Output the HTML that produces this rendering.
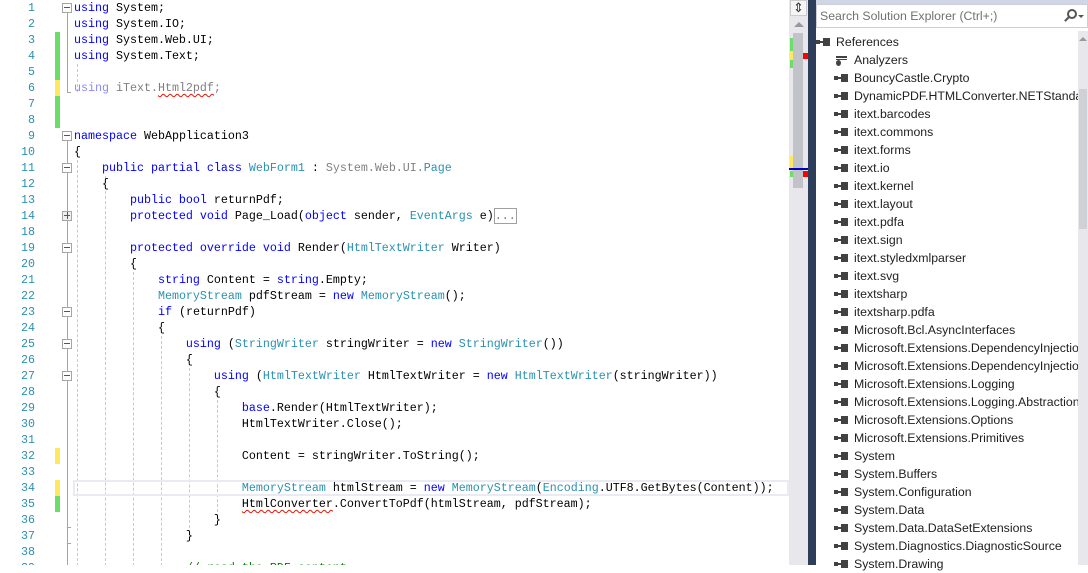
<!DOCTYPE html>
<html><head><meta charset="utf-8"><style>
*{margin:0;padding:0;box-sizing:border-box}
body{width:1088px;height:565px;overflow:hidden;background:#fff;position:relative;font-family:"Liberation Sans",sans-serif}
.ed{position:absolute;left:0;top:0;width:789px;height:565px;background:#fff;overflow:hidden}
.rows{position:absolute;left:0;top:1px;width:789px;height:565px}
.r{position:absolute;left:0;height:16px;width:789px;font-family:"Liberation Mono",monospace;font-size:11.67px;line-height:16px;white-space:pre;color:#000}
.n{position:absolute;right:754px;width:34px;text-align:right;color:#2b91af}
.c{position:absolute;left:74px}
.k{color:#0000ff}.t{color:#2b91af}.g{color:#808080}.f{color:#8a8aff}.cm{color:#008000}
.sq{text-decoration:underline wavy #e51400;text-decoration-thickness:1px;text-underline-offset:2px}
.mk{position:absolute;left:55px;width:5px;height:16px}
.y{background:#fee85f}.gr{background:#6cdc6a}
.fb{position:absolute;left:62px;width:10px;height:10px;border:1px solid #a5a5a5;background:#fff}
.fb:after{content:"";position:absolute;left:1px;top:3px;width:6px;height:1px;background:#555}
.fb.p:before{content:"";position:absolute;left:4px;top:0px;width:1px;height:7px;background:#555}
.vl{position:absolute;left:67px;width:1px;background:#a5a5a5}
.dg{position:absolute;width:0;border-left:1px dashed #c8c8c8}
.se{position:absolute;left:816px;top:0;width:272px;height:565px;background:#fff}
.it{position:absolute;left:38px;height:18px;line-height:18px;font-size:12.3px;color:#1e1e1e;white-space:nowrap}
.ic{position:absolute;left:-20px;top:5px;width:14px;height:8px}
.ic:before{content:"";position:absolute;left:0;top:2px;width:4px;height:4px;background:#424242}
.ic:after{content:"";position:absolute;left:7px;top:0;width:7px;height:8px;background:#424242}
.ic i{position:absolute;left:4px;top:3px;width:3px;height:2px;background:#424242}
</style></head><body>
<div class="ed">
<div class="rows">
<div class="vl" style="top:3px;height:88px"></div>
<div class="vl" style="top:131px;height:434px"></div>
<div style="position:absolute;left:67px;top:91px;width:4px;height:1px;background:#a5a5a5"></div>
<div style="position:absolute;left:67px;top:526px;width:4px;height:1px;background:#a5a5a5"></div>
<div style="position:absolute;left:67px;top:542px;width:4px;height:1px;background:#a5a5a5"></div>
<div class="dg" style="left:77px;top:63px;height:28px"></div>
<div class="dg" style="left:77px;top:159px;height:406px"></div>
<div class="dg" style="left:105px;top:175px;height:390px"></div>
<div class="dg" style="left:133px;top:271px;height:294px"></div>
<div class="dg" style="left:161px;top:335px;height:230px"></div>
<div class="dg" style="left:189px;top:367px;height:160px"></div>
<div class="dg" style="left:217px;top:399px;height:112px"></div>
<div style="position:absolute;left:73px;top:479px;width:716px;height:16px;border:2px solid #eaeaf2"></div>
<div class="mk gr" style="top:31px;height:32px"></div>
<div class="mk gr" style="top:63px;height:16px"></div>
<div class="mk y" style="top:79px"></div>
<div class="mk gr" style="top:95px;height:32px"></div>
<div class="mk y" style="top:447px"></div>
<div class="mk y" style="top:479px"></div>
<div class="mk gr" style="top:495px"></div>
<div class="fb" style="top:2px"></div>
<div class="fb" style="top:130px"></div>
<div class="fb" style="top:162px"></div>
<div class="fb p" style="top:210px;background:#eee"></div>
<div class="fb" style="top:242px"></div>
<div class="fb" style="top:306px"></div>
<div class="fb" style="top:338px"></div>
<div class="fb" style="top:370px"></div>

<div class="r" style="top:-1px"><span class="n">1</span><span class="c"><span class="k">using</span> System;</span></div>
<div class="r" style="top:15px"><span class="n">2</span><span class="c"><span class="k">using</span> System.IO;</span></div>
<div class="r" style="top:31px"><span class="n">3</span><span class="c"><span class="k">using</span> System.Web.UI;</span></div>
<div class="r" style="top:47px"><span class="n">4</span><span class="c"><span class="k">using</span> System.Text;</span></div>
<div class="r" style="top:63px"><span class="n">5</span></div>
<div class="r" style="top:79px"><span class="n">6</span><span class="c"><span class="f">using</span><span class="g"> iText.<span class="sq">Html2pdf</span>;</span></span></div>
<div class="r" style="top:95px"><span class="n">7</span></div>
<div class="r" style="top:111px"><span class="n">8</span></div>
<div class="r" style="top:127px"><span class="n">9</span><span class="c"><span class="k">namespace</span> WebApplication3</span></div>
<div class="r" style="top:143px"><span class="n">10</span><span class="c">{</span></div>
<div class="r" style="top:159px"><span class="n">11</span><span class="c">    <span class="k">public partial class</span> <span class="t">WebForm1</span> : <span class="g">System.Web.UI.</span><span class="t">Page</span></span></div>
<div class="r" style="top:175px"><span class="n">12</span><span class="c">    {</span></div>
<div class="r" style="top:191px"><span class="n">13</span><span class="c">        <span class="k">public bool</span> returnPdf;</span></div>
<div class="r" style="top:207px"><span class="n">14</span><span class="c">        <span class="k">protected void</span> Page_Load(<span class="k">object</span> sender, <span class="t">EventArgs</span> e)<span style="border:1px solid #a0a0a0;color:#777">...</span></span></div>
<div class="r" style="top:223px"><span class="n">18</span></div>
<div class="r" style="top:239px"><span class="n">19</span><span class="c">        <span class="k">protected override void</span> Render(<span class="t">HtmlTextWriter</span> Writer)</span></div>
<div class="r" style="top:255px"><span class="n">20</span><span class="c">        {</span></div>
<div class="r" style="top:271px"><span class="n">21</span><span class="c">            <span class="k">string</span> Content = <span class="k">string</span>.Empty;</span></div>
<div class="r" style="top:287px"><span class="n">22</span><span class="c">            <span class="t">MemoryStream</span> pdfStream = <span class="k">new</span> <span class="t">MemoryStream</span>();</span></div>
<div class="r" style="top:303px"><span class="n">23</span><span class="c">            <span class="k">if</span> (returnPdf)</span></div>
<div class="r" style="top:319px"><span class="n">24</span><span class="c">            {</span></div>
<div class="r" style="top:335px"><span class="n">25</span><span class="c">                <span class="k">using</span> (<span class="t">StringWriter</span> stringWriter = <span class="k">new</span> <span class="t">StringWriter</span>())</span></div>
<div class="r" style="top:351px"><span class="n">26</span><span class="c">                {</span></div>
<div class="r" style="top:367px"><span class="n">27</span><span class="c">                    <span class="k">using</span> (<span class="t">HtmlTextWriter</span> HtmlTextWriter = <span class="k">new</span> <span class="t">HtmlTextWriter</span>(stringWriter))</span></div>
<div class="r" style="top:383px"><span class="n">28</span><span class="c">                    {</span></div>
<div class="r" style="top:399px"><span class="n">29</span><span class="c">                        <span class="k">base</span>.Render(HtmlTextWriter);</span></div>
<div class="r" style="top:415px"><span class="n">30</span><span class="c">                        HtmlTextWriter.Close();</span></div>
<div class="r" style="top:431px"><span class="n">31</span></div>
<div class="r" style="top:447px"><span class="n">32</span><span class="c">                        Content = stringWriter.ToString();</span></div>
<div class="r" style="top:463px"><span class="n">33</span></div>
<div class="r" style="top:479px"><span class="n">34</span><span class="c">                        <span class="t">MemoryStream</span> htmlStream = <span class="k">new</span> <span class="t">MemoryStream</span>(<span class="t">Encoding</span>.UTF8.GetBytes(Content));</span></div>
<div class="r" style="top:495px"><span class="n">35</span><span class="c">                        <span class="sq">HtmlConverter</span>.ConvertToPdf(htmlStream, pdfStream);</span></div>
<div class="r" style="top:511px"><span class="n">36</span><span class="c">                    }</span></div>
<div class="r" style="top:527px"><span class="n">37</span><span class="c">                }</span></div>
<div class="r" style="top:543px"><span class="n">38</span></div>
<div class="r" style="top:559px"><span class="n">39</span><span class="c">                <span class="cm">// read the PDF content</span></span></div>
</div>
</div>

<div style="position:absolute;left:789px;top:0;width:19px;height:565px;background:#e8e8ec"></div>
<div style="position:absolute;left:790px;top:0;width:17px;height:16px;background:#f5f5f5;border:1px solid #ccc;font-size:13px;line-height:13px;text-align:center;color:#333">⇕</div>
<div style="position:absolute;left:794px;top:22px;width:0;height:0;border-left:5px solid transparent;border-right:5px solid transparent;border-bottom:5px solid #999"></div>
<div style="position:absolute;left:793px;top:33px;width:10px;height:155px;background:#c2c3c9"></div>
<div style="position:absolute;left:790px;top:38px;width:3px;height:13px;background:#6cdc6a"></div>
<div style="position:absolute;left:790px;top:51px;width:3px;height:9px;background:#fee85f"></div>
<div style="position:absolute;left:790px;top:60px;width:3px;height:8px;background:#6cdc6a"></div>
<div style="position:absolute;left:803px;top:53px;width:5px;height:6px;background:#f00"></div>
<div style="position:absolute;left:790px;top:156px;width:3px;height:12px;background:#fee85f"></div>
<div style="position:absolute;left:789px;top:168px;width:19px;height:2px;background:#0000c0"></div>
<div style="position:absolute;left:790px;top:171px;width:3px;height:6px;background:#6cdc6a"></div>
<div style="position:absolute;left:803px;top:171px;width:5px;height:6px;background:#f00"></div>
<div style="position:absolute;left:808px;top:0;width:8px;height:565px;background:#2e3d5a"></div>

<div class="se">
<div style="position:absolute;left:0;top:0;width:272px;height:4px;background:#cfd6e5"></div>
<div style="position:absolute;left:0;top:4px;width:272px;height:24px;background:#fff;border:1px solid #cccedb"></div>
<div style="position:absolute;left:4px;top:9px;font-size:12.3px;color:#717171">Search Solution Explorer (Ctrl+;)</div>
<div style="position:absolute;left:251px;top:9px;width:10px;height:10px;border:2px solid #555;border-radius:50%"></div>
<div style="position:absolute;left:248px;top:18px;width:6px;height:2px;background:#555;transform:rotate(-45deg)"></div>
<div style="position:absolute;left:262px;top:15px;border-left:3px solid transparent;border-right:3px solid transparent;border-top:3px solid #555"></div>

<div class="it" style="left:20px;top:33px"><span class="ic"><i></i></span>References</div>
<div class="it" style="top:51px"><span style="position:absolute;left:-18px;top:5px;width:11px;height:2px;background:#424242"></span><span style="position:absolute;left:-18px;top:8px;width:11px;height:1px;background:#424242"></span><span style="position:absolute;left:-18px;top:9px;width:5px;height:6px;border-radius:50%;background:#424242"></span>Analyzers</div>
<div class="it" style="top:69px"><span class="ic"><i></i></span>BouncyCastle.Crypto</div>
<div class="it" style="top:87px"><span class="ic"><i></i></span>DynamicPDF.HTMLConverter.NETStandard</div>
<div class="it" style="top:105px"><span class="ic"><i></i></span>itext.barcodes</div>
<div class="it" style="top:123px"><span class="ic"><i></i></span>itext.commons</div>
<div class="it" style="top:141px"><span class="ic"><i></i></span>itext.forms</div>
<div class="it" style="top:159px"><span class="ic"><i></i></span>itext.io</div>
<div class="it" style="top:177px"><span class="ic"><i></i></span>itext.kernel</div>
<div class="it" style="top:195px"><span class="ic"><i></i></span>itext.layout</div>
<div class="it" style="top:213px"><span class="ic"><i></i></span>itext.pdfa</div>
<div class="it" style="top:231px"><span class="ic"><i></i></span>itext.sign</div>
<div class="it" style="top:249px"><span class="ic"><i></i></span>itext.styledxmlparser</div>
<div class="it" style="top:267px"><span class="ic"><i></i></span>itext.svg</div>
<div class="it" style="top:285px"><span class="ic"><i></i></span>itextsharp</div>
<div class="it" style="top:303px"><span class="ic"><i></i></span>itextsharp.pdfa</div>
<div class="it" style="top:321px"><span class="ic"><i></i></span>Microsoft.Bcl.AsyncInterfaces</div>
<div class="it" style="top:339px"><span class="ic"><i></i></span>Microsoft.Extensions.DependencyInjection</div>
<div class="it" style="top:357px"><span class="ic"><i></i></span>Microsoft.Extensions.DependencyInjection</div>
<div class="it" style="top:375px"><span class="ic"><i></i></span>Microsoft.Extensions.Logging</div>
<div class="it" style="top:393px"><span class="ic"><i></i></span>Microsoft.Extensions.Logging.Abstractions</div>
<div class="it" style="top:411px"><span class="ic"><i></i></span>Microsoft.Extensions.Options</div>
<div class="it" style="top:429px"><span class="ic"><i></i></span>Microsoft.Extensions.Primitives</div>
<div class="it" style="top:447px"><span class="ic"><i></i></span>System</div>
<div class="it" style="top:465px"><span class="ic"><i></i></span>System.Buffers</div>
<div class="it" style="top:483px"><span class="ic"><i></i></span>System.Configuration</div>
<div class="it" style="top:501px"><span class="ic"><i></i></span>System.Data</div>
<div class="it" style="top:519px"><span class="ic"><i></i></span>System.Data.DataSetExtensions</div>
<div class="it" style="top:537px"><span class="ic"><i></i></span>System.Diagnostics.DiagnosticSource</div>
<div class="it" style="top:555px"><span class="ic"><i></i></span>System.Drawing</div>
<div style="position:absolute;left:262px;top:31px;width:10px;height:534px;background:#e8e8ec;z-index:2"></div>
<div style="position:absolute;left:263px;top:89px;width:8px;height:140px;background:#d0d1d7;z-index:3"></div>
<div style="position:absolute;left:263px;top:37px;border-left:4px solid transparent;border-right:4px solid transparent;border-bottom:4px solid #999;z-index:3"></div>
</div>
</body></html>
